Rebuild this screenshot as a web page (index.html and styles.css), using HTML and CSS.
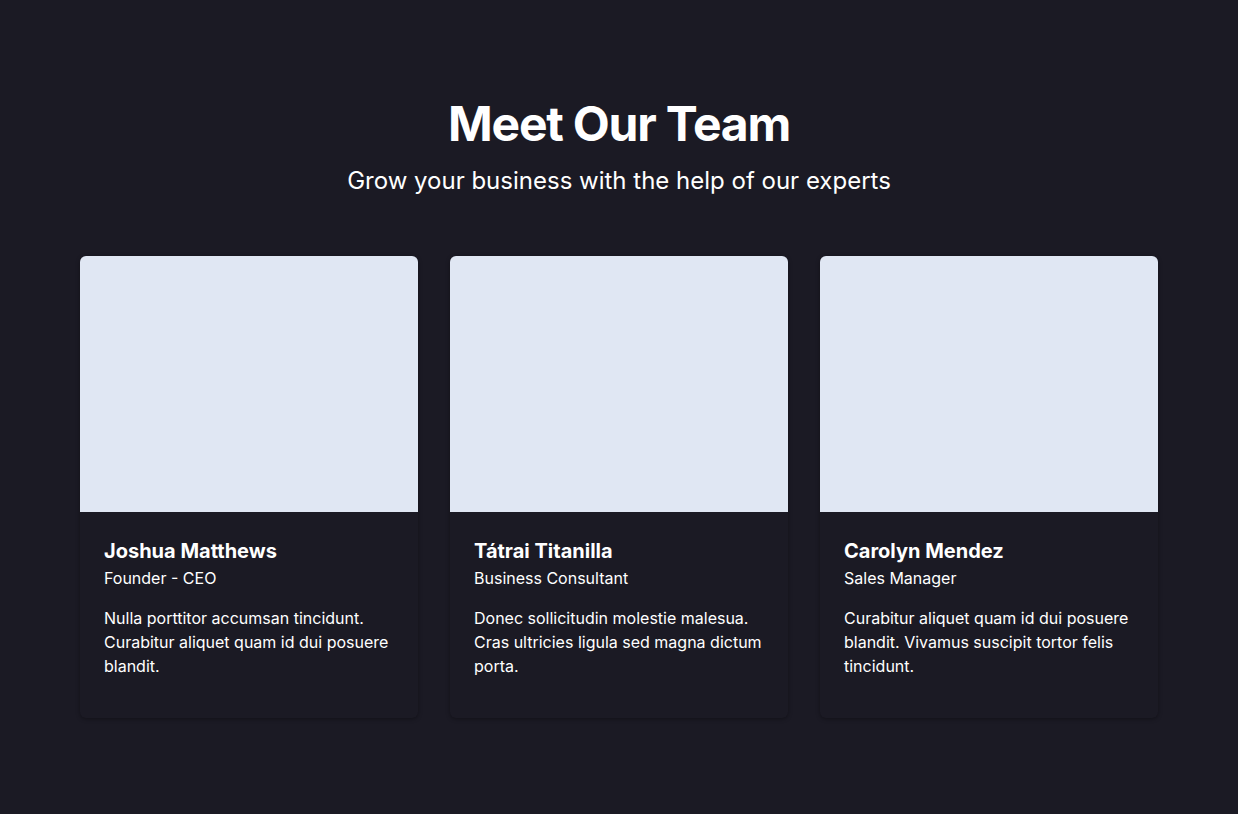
FILE: index.html
```html
<!DOCTYPE html>
<html lang="en">
<head>
<meta charset="utf-8">
<title>Meet Our Team</title>
<link rel="stylesheet" href="styles.css">
</head>
<body>
<section class="team">
  <header class="team-header">
    <h1 class="team-title">Meet Our Team</h1>
    <p class="team-subtitle">Grow your business with the help of our experts</p>
  </header>
  <div class="team-grid">
    <article class="card">
      <div class="card-photo"></div>
      <div class="card-body">
        <h2 class="card-name">Joshua Matthews</h2>
        <p class="card-role">Founder - CEO</p>
        <p class="card-text">Nulla porttitor accumsan tincidunt. Curabitur aliquet quam id dui posuere blandit.</p>
      </div>
    </article>
    <article class="card">
      <div class="card-photo"></div>
      <div class="card-body">
        <h2 class="card-name">Tátrai Titanilla</h2>
        <p class="card-role">Business Consultant</p>
        <p class="card-text">Donec sollicitudin molestie malesua. Cras ultricies ligula sed magna dictum porta.</p>
      </div>
    </article>
    <article class="card">
      <div class="card-photo"></div>
      <div class="card-body">
        <h2 class="card-name">Carolyn Mendez</h2>
        <p class="card-role">Sales Manager</p>
        <p class="card-text">Curabitur aliquet quam id dui posuere blandit. Vivamus suscipit tortor felis tincidunt.</p>
      </div>
    </article>
  </div>
</section>
</body>
</html>
```

FILE: styles.css
```css
* { box-sizing: border-box; }
html, body {
  margin: 0;
  padding: 0;
  background: #1b1a24;
  color: #ffffff;
  font-family: Inter, "Noto Sans", sans-serif;
}
.team {
  padding: 100px 80px 96px;
}
.team-header {
  text-align: center;
  margin-bottom: 58px;
}
.team-title {
  margin: 0 0 16px;
  font-size: 48px;
  line-height: 48px;
  font-weight: 700;
  letter-spacing: -0.025em;
}
.team-subtitle {
  margin: 0;
  font-size: 24px;
  line-height: 34px;
  font-weight: 400;
}
.team-grid {
  display: grid;
  grid-template-columns: repeat(3, 1fr);
  gap: 32px;
}
.card {
  background: #1b1a24;
  border-radius: 6px;
  overflow: hidden;
  box-shadow: 0 1px 4px rgba(0, 0, 0, 0.35);
}
.card-photo {
  height: 256px;
  background: #e0e7f3;
}
.card-body {
  padding: 25px 24px 40px;
}
.card-name {
  margin: 0 0 1px;
  font-size: 20px;
  line-height: 28px;
  font-weight: 700;
}
.card-role {
  margin: 0 0 16px;
  font-size: 16px;
  line-height: 24px;
}
.card-text {
  margin: 0;
  font-size: 16px;
  line-height: 24px;
}
```
